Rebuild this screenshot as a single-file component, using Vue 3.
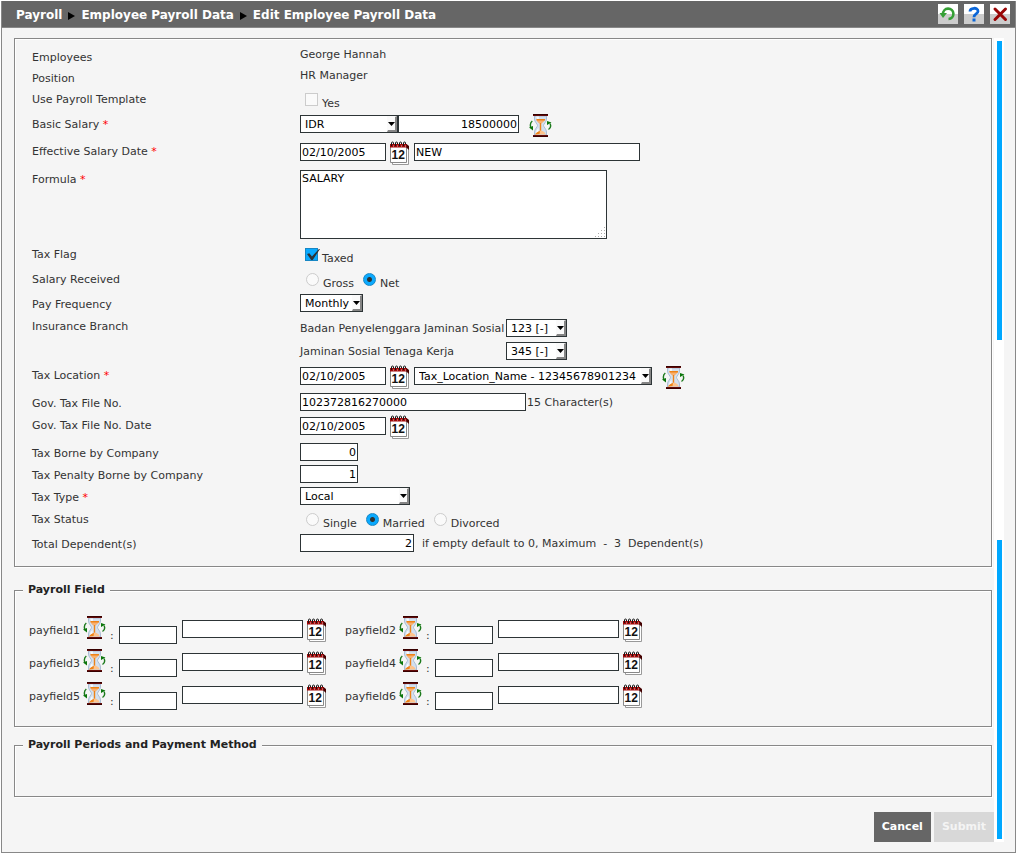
<script setup>
import { h, ref } from 'vue'

const icon = (viewBox, body) => () => h('svg', { viewBox, innerHTML: body, 'aria-hidden': 'true' })

const Calendar = icon('0 0 20 24', `
  <path d="M2.500 7h16v16.500h-16z" fill="#fff" stroke="#999" />
  <path d="M.5 5h16v16.500h-16z" fill="#fff" stroke="#888" />
  <path d="M0 3h17v3.500H0z" fill="#a00808" />
  <path d="M16.500 3l2.500 2v4l-2.500-2.500z" fill="#400" />
  <path d="M1.500 5V2q0-1 1-1t1 1v1M5.500 5V2q0-1 1-1t1 1v1M9.500 5V2q0-1 1-1t1 1v1M13.500 5V2q0-1 1-1t1 1v1" fill="none" stroke="#181818" />
  <path d="M3 5h1M7 5h1M11 5h1M15 5h1" stroke="#dbb" />
  <text x="1.500" y="18" font-family="Liberation Sans, Arial, sans-serif" font-size="12" font-weight="bold" fill="#111">12</text>`)

const Hourglass = icon('0 0 23 24', `
  <path d="M5.500 2h12v3c0 3-3 5-3 6.500s3 3.500 3 6.500v3h-12v-3c0-3 3-5 3-6.500s-3-3.500-3-6.500z" fill="#d3e0ef" stroke="#9db2cc" stroke-width=".8" />
  <path d="M7 2.500h3l-.5 5zM7 20c0-3 1-5 2.500-6v4z" fill="#f7fbff" />
  <path d="M7.500 5h8.500c0 2-2 3-3.500 4.500h-2C9 8.500 7.500 7 7.500 5z" fill="#f8b070" />
  <path d="M7.500 5h8.500v1.500H7.500z" fill="#ee8318" />
  <path d="M11.500 9v8" stroke="#ee8318" stroke-width="1.400" />
  <path d="M6 20.500c1-1 3-3 5.500-4 3 .5 5 2 5 4z" fill="#ffc48c" />
  <path d="M6 20.500c1-2 3-3 5-3.500l-.5 3z" fill="#ee8318" />
  <path d="M4 0h15v2H4zM4 21h15v2H4z" fill="#650b08" />
  <path d="M4 0h15v1H4zM4 22h15v1H4z" fill="#370000" />
  <path d="M3.300 7C1.300 8.500 1 11 1.800 13.500M19.500 15.500C21.800 14 22 11.500 21 9.500" fill="none" stroke="#1c7a1c" stroke-width="1.400" />
  <path d="M0 13.500l4-1.500v4.500zM22.500 8.500l-4.500-1.500v4z" fill="#0c760c" />`)

const Arrow = icon('0 0 10 16', `
  <path d="M0 0h10v16H0z" fill="#fafafa" />
  <path d="M8 1l2-1v16H0l1-2h7z" fill="#858585" />
  <path d="M1 6h7L4.500 10z" fill="#000" />`)

const template = ref(false)
const taxed = ref(true)
const received = ref('Net')
const status = ref('Married')
const fields = ref([1, 2, 3, 4, 5, 6].map((n) => ({ id: n, name: 'payfield' + n, code: '', value: '' })))
</script>

<template>
  <div class="window">
    <header class="titlebar">
      <nav class="crumbs" aria-label="Breadcrumb">
        <span>Payroll</span>
        <svg width="7" height="8" viewBox="0 0 7 8"><path d="M0 0l7 4-7 4z" /></svg>
        <span>Employee Payroll Data</span>
        <svg width="7" height="8" viewBox="0 0 7 8"><path d="M0 0l7 4-7 4z" /></svg>
        <span>Edit Employee Payroll Data</span>
      </nav>
      <div class="tools">
        <button type="button" aria-label="Refresh">
          <svg width="20" height="20" viewBox="0 0 20 20">
            <path d="M5 10A5.200 5.200 0 1 1 10.500 15" fill="none" stroke="#35a035" stroke-width="2.600" />
            <path d="M1.500 9h7.500l-4 5z" fill="#35a035" />
          </svg>
        </button>
        <button type="button" aria-label="Help">
          <svg width="20" height="20" viewBox="0 0 20 20">
            <path d="M6 7.500C6 3.500 14 3 14 7.200c0 2.800-4 2.800-4 6" fill="none" stroke="#0b66d8" stroke-width="2.800" />
            <path d="M8.500 14.500h3v3h-3z" fill="#0b66d8" />
          </svg>
        </button>
        <button type="button" aria-label="Close">
          <svg width="20" height="20" viewBox="0 0 20 20">
            <path d="M5 5l10.500 10.500M15.500 5L5 15.500" fill="none" stroke="#990505" stroke-width="3" stroke-linecap="round" />
          </svg>
        </button>
      </div>
    </header>

    <div class="body">
      <form class="main" @submit.prevent>
        <fieldset class="details">
          <div class="row h21"><span class="name">Employees</span><div class="field">George Hannah</div></div>
          <div class="row h21"><span class="name">Position</span><div class="field">HR Manager</div></div>
          <div class="row h25">
            <span class="name">Use Payroll Template</span>
            <div class="field checks">
              <label class="option"><input v-model="template" type="checkbox" /><span>Yes</span></label>
            </div>
          </div>
          <div class="row h27">
            <label class="name" for="salary">Basic Salary <b>*</b></label>
            <div class="field drop1">
              <span class="select w98">
                <select aria-label="Currency"><option>IDR</option></select>
                <Arrow class="arrow" />
              </span>
              <input id="salary" class="w121 num" type="text" value="18500000" />
              <Hourglass class="icon hourglass far" />
            </div>
          </div>
          <div class="row h28">
            <label class="name" for="effective">Effective Salary Date <b>*</b></label>
            <div class="field drop2">
              <input id="effective" class="w86" type="text" value="02/10/2005" />
              <Calendar class="icon calendar" />
              <input class="w226" type="text" value="NEW" aria-label="Salary note" />
            </div>
          </div>
          <div class="row h75">
            <label class="name" for="formula">Formula <b>*</b></label>
            <div class="field drop1"><textarea id="formula">SALARY</textarea></div>
          </div>
          <div class="row h25">
            <span class="name">Tax Flag</span>
            <div class="field checks">
              <label class="option"><input v-model="taxed" type="checkbox" /><span>Taxed</span></label>
            </div>
          </div>
          <div class="row h25">
            <span class="name">Salary Received</span>
            <div class="field radios">
              <label v-for="o in ['Gross', 'Net']" :key="o" class="option">
                <input v-model="received" type="radio" name="received" :value="o" /><span>{{ o }}</span>
              </label>
            </div>
          </div>
          <div class="row h22">
            <label class="name" for="frequency">Pay Frequency</label>
            <div class="field">
              <span class="select w63">
                <select id="frequency"><option>Monthly</option></select>
                <Arrow class="arrow" />
              </span>
            </div>
          </div>
          <div class="row h49">
            <span class="name">Insurance Branch</span>
            <div class="field insurance">
              <label for="bpjs">Badan Penyelenggara Jaminan Sosial</label>
              <span class="select w61">
                <select id="bpjs"><option>123 [-]</option></select>
                <Arrow class="arrow" />
              </span>
              <label for="jstk">Jaminan Sosial Tenaga Kerja</label>
              <span class="select w61">
                <select id="jstk"><option>345 [-]</option></select>
                <Arrow class="arrow" />
              </span>
            </div>
          </div>
          <div class="row h28">
            <label class="name" for="location">Tax Location <b>*</b></label>
            <div class="field drop2">
              <input class="w86" type="text" value="02/10/2005" aria-label="Tax location date" />
              <Calendar class="icon calendar" />
              <span class="select w238">
                <select id="location"><option>Tax_Location_Name - 12345678901234</option></select>
                <Arrow class="arrow" />
              </span>
              <Hourglass class="icon hourglass far" />
            </div>
          </div>
          <div class="row h22">
            <label class="name" for="taxfile">Gov. Tax File No.</label>
            <div class="field">
              <input id="taxfile" class="w226" type="text" value="102372816270000" />
              <span class="hint">15 Character(s)</span>
            </div>
          </div>
          <div class="row h28">
            <label class="name" for="taxdate">Gov. Tax File No. Date</label>
            <div class="field drop2">
              <input id="taxdate" class="w86" type="text" value="02/10/2005" />
              <Calendar class="icon calendar" />
            </div>
          </div>
          <div class="row h22">
            <label class="name" for="borne">Tax Borne by Company</label>
            <div class="field"><input id="borne" class="w58 num" type="text" value="0" /></div>
          </div>
          <div class="row h22">
            <label class="name" for="penalty">Tax Penalty Borne by Company</label>
            <div class="field"><input id="penalty" class="w58 num" type="text" value="1" /></div>
          </div>
          <div class="row h22">
            <label class="name" for="taxtype">Tax Type <b>*</b></label>
            <div class="field">
              <span class="select w110">
                <select id="taxtype"><option>Local</option></select>
                <Arrow class="arrow" />
              </span>
            </div>
          </div>
          <div class="row h25">
            <span class="name">Tax Status</span>
            <div class="field radios">
              <label v-for="o in ['Single', 'Married', 'Divorced']" :key="o" class="option">
                <input v-model="status" type="radio" name="status" :value="o" /><span>{{ o }}</span>
              </label>
            </div>
          </div>
          <div class="row h22">
            <label class="name" for="dependents">Total Dependent(s)</label>
            <div class="field">
              <input id="dependents" class="w114 num" type="text" value="2" />
              <span class="hint wide">if empty default to 0, Maximum&nbsp; -&nbsp; 3&nbsp; Dependent(s)</span>
            </div>
          </div>
        </fieldset>

        <fieldset class="payfields">
          <legend>Payroll Field</legend>
          <div class="paygrid">
            <div v-for="f in fields" :key="f.id" class="payfield">
              <label :for="f.name">{{ f.name }}</label>
              <Hourglass class="hourglass" />
              <span class="colon">:</span>
              <input :id="f.name" v-model="f.code" class="w58 code" type="text" />
              <input v-model="f.value" class="w121 value" type="text" :aria-label="f.name + ' value'" />
              <Calendar class="calendar" />
            </div>
          </div>
        </fieldset>

        <fieldset class="periods">
          <legend>Payroll Periods and Payment Method</legend>
        </fieldset>

        <div class="actions">
          <button type="button">Cancel</button>
          <button type="submit" disabled>Submit</button>
        </div>
      </form>
      <div class="track"><i class="thumb"></i><i class="space"></i><i class="thumb"></i></div>
    </div>
  </div>
</template>

<style>
body {
  background: #fff;
}
</style>

<style scoped>
* {
  box-sizing: border-box;
}
.window {
  display: flex;
  flex-direction: column;
  min-height: calc(100vh - 3px);
  margin: 1px 1px 2px;
  border: 1px solid #888;
  border-top: 0;
  background: #f5f5f5;
  color: #333;
  font: 11px/16px "DejaVu Sans", Verdana, sans-serif;
}
.titlebar {
  display: flex;
  justify-content: space-between;
  align-items: center;
  height: 27px;
  padding: 0 5px 0 14px;
  background: #666;
  border-bottom: 1px solid #888;
}
.crumbs {
  display: flex;
  align-items: center;
  gap: 6px;
  padding-top: 2px;
  color: #fff;
  font-size: 12px;
  font-weight: bold;
}
.crumbs svg {
  margin-top: 2px;
}
.tools {
  display: flex;
  gap: 6px;
}
.tools button {
  width: 20px;
  height: 20px;
  padding: 0;
  border: 0;
  background: linear-gradient(#fff 50%, #ccc 50%);
}
.tools svg {
  display: block;
}
.body {
  flex: 1;
  display: flex;
  padding: 10px 11px 10px 12px;
}
.main {
  flex: 1;
  min-width: 0;
}
fieldset {
  min-width: 0;
  margin: 0 2px 0 0;
  border: 1px solid #888;
  box-shadow: 1px 1px #fff, inset 1px 1px #fff;
}
legend {
  padding: 0 5px;
  background: #f5f5f5;
  color: #222;
  font-weight: bold;
}
.details {
  padding: 8px 17px 10px;
}
.payfields {
  margin-top: 15px;
  padding: 18px 8px 11px;
}
.periods {
  min-height: 60px;
  margin-top: 10px;
  padding: 0 8px;
}
.row {
  display: grid;
  grid-template-columns: 268px 1fr;
}
.name {
  padding-top: 3px;
}
.name b {
  color: #f00;
  font-weight: normal;
}
.field {
  display: flex;
  align-items: flex-start;
}
.drop1 {
  padding-top: 1px;
}
.drop2 {
  padding-top: 2px;
}
.h21 { height: 21px; }
.h22 { height: 22px; }
.h25 { height: 25px; }
.h27 { height: 27px; }
.h28 { height: 28px; }
.h49 { height: 49px; }
.h75 { height: 75px; }
.w58 { width: 58px; }
.w61 { width: 61px; }
.w63 { width: 63px; }
.w86 { width: 86px; }
.w98 { width: 98px; }
.w110 { width: 110px; }
.w114 { width: 114px; }
.w121 { width: 121px; }
.w226 { width: 226px; }
.w238 { width: 238px; }
input[type='text'],
select,
textarea {
  height: 18px;
  margin: 0;
  padding: 0 1px;
  border: 1px solid #2d3436;
  border-radius: 0;
  background: #fff;
  color: #000;
  font: inherit;
}
textarea {
  width: 307px;
  height: 69px;
}
textarea::-webkit-resizer {
  background:
    linear-gradient(135deg, #fff 55%, transparent 55%),
    radial-gradient(circle, #aaa 20%, #fff 40%) 0 0 / 3px 3px;
}
input.num {
  text-align: right;
}
.select {
  position: relative;
}
.select select {
  display: block;
  width: 100%;
  padding: 1px 4px 0;
  appearance: none;
}
.arrow {
  position: absolute;
  top: 1px;
  right: 1px;
  width: 10px;
  height: 16px;
  pointer-events: none;
}
.calendar {
  width: 20px;
  height: 24px;
}
.hourglass {
  width: 23px;
  height: 24px;
}
.icon {
  margin: -2px 4px 0;
}
.icon.far {
  margin: -1px 0 0 10px;
}
.hint {
  padding: 2px 0 0 1px;
}
.hint.wide {
  padding-left: 8px;
}
.checks,
.radios {
  gap: 9px;
  padding: 4px 0 0 5px;
}
.radios {
  padding-left: 6px;
}
.option {
  display: flex;
  gap: 4px;
}
.option span {
  padding-top: 3px;
}
.option input {
  position: relative;
  width: 13px;
  height: 13px;
  margin: 0;
  border: 1px solid #ccc;
  background: #fafafa;
  appearance: none;
}
.option input[type='radio'] {
  border-radius: 50%;
}
.option input:checked {
  border-color: #1787c4;
  background: #0aaaff;
}
.option input[type='radio']:checked {
  background: radial-gradient(circle, #2d3436 2px, #0aaaff 3px);
}
.option input[type='checkbox']:checked::after {
  content: '';
  position: absolute;
  top: 0;
  left: 1px;
  width: 13px;
  height: 11px;
  background: #2d3436;
  clip-path: polygon(0 45%, 18% 38%, 38% 68%, 92% 0, 100% 0, 44% 100%, 32% 100%);
}
.insurance {
  display: grid;
  grid-template-columns: 206px auto;
  grid-auto-rows: 18px;
  justify-content: start;
  align-content: start;
  align-items: center;
  gap: 5px 0;
  padding-top: 3px;
}
.insurance label {
  padding-top: 1px;
  white-space: nowrap;
}
.paygrid {
  display: grid;
  grid-template-columns: repeat(2, 316px);
  grid-auto-rows: 33px;
  padding-left: 6px;
}
.payfield {
  display: flex;
  align-items: flex-start;
}
.payfield label {
  width: 54px;
  padding-top: 7px;
}
.payfield .colon {
  width: 13px;
  padding: 12px 0 0 4px;
}
.payfield .code {
  margin-top: 10px;
}
.payfield .value {
  margin: 4px 4px 0 5px;
}
.payfield .calendar {
  margin-top: 2px;
}
.actions {
  display: flex;
  justify-content: flex-end;
  gap: 3px;
  margin-top: 15px;
}
.actions button {
  height: 30px;
  padding: 0 8px;
  border: 0;
  background: #666;
  color: #fff;
  font: inherit;
  font-weight: bold;
}
.actions button:disabled {
  background: #d8d8d8;
  color: #f4f4f4;
}
.track {
  display: flex;
  flex-direction: column;
  width: 10px;
  padding: 3px 2px 3px 3px;
  background: #fff;
}
.thumb {
  flex: 3;
  background: #00a8ff;
}
.space {
  flex: 2;
}
</style>
